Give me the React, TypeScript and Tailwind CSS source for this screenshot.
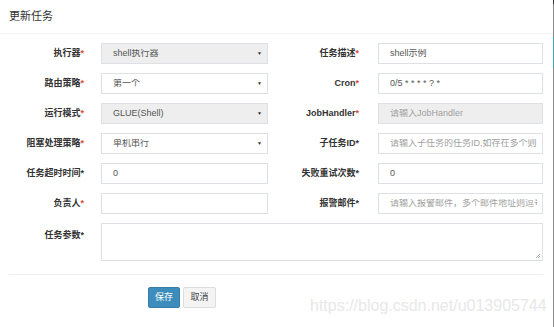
import React from "react";

const font = { fontFamily: '"Liberation Sans", Arial, "Noto Sans CJK SC", sans-serif' };

function Label({ text, red = true, w }: { text: string; red?: boolean; w: string }) {
  return (
    <div className={`${w} shrink-0 text-right text-[9px] font-bold text-[#333] leading-none`}>
      {text}
      <span className={red ? "text-[#dd4b39]" : "text-[#333]"}>*</span>
    </div>
  );
}

function Field({
  value,
  placeholder,
  disabled,
  select,
  w,
}: {
  value?: string;
  placeholder?: string;
  disabled?: boolean;
  select?: boolean;
  w: string;
}) {
  return (
    <div
      className={`${w} h-[21px] shrink-0 border border-[#dde0e5] flex items-center pl-[11px] pr-[5px] text-[9px] leading-none overflow-hidden whitespace-nowrap ${
        disabled ? "bg-[#eeeeee]" : "bg-white"
      }`}
    >
      <span className={`flex-1 min-w-0 overflow-hidden text-clip ${value ? "text-[#555]" : "text-[#a0a0a0]"}`}>
        {value ?? placeholder}
      </span>
      {select && <span className="text-[5px] text-[#333] ml-1">▼</span>}
    </div>
  );
}

function Row({ children }: { children: React.ReactNode }) {
  return <div className="flex items-center h-[21px]">{children}</div>;
}

export default function App() {
  return (
    <div className="w-[554px] h-[327px] bg-white flex relative overflow-hidden" style={font}>
      <div className="w-[553px] flex flex-col">
        <div className="h-[34px] border-b border-[#f4f4f4] pl-[9px] flex items-center text-[11px] text-[#333] pb-[1px]">
          更新任务
        </div>
        <div className="pt-[9px] flex flex-col gap-[9px]">
          <Row>
            <Label text="执行器" w="w-[84px]" />
            <div className="w-[17px]" />
            <Field value="shell执行器" disabled select w="w-[167px]" />
            <Label text="任务描述" w="w-[91px]" />
            <div className="w-[19px]" />
            <Field value="shell示例" w="w-[165px]" />
          </Row>
          <Row>
            <Label text="路由策略" w="w-[84px]" />
            <div className="w-[17px]" />
            <Field value="第一个" select w="w-[167px]" />
            <Label text="Cron" w="w-[91px]" />
            <div className="w-[19px]" />
            <Field value="0/5 * * * * ? *" w="w-[165px]" />
          </Row>
          <Row>
            <Label text="运行模式" w="w-[84px]" />
            <div className="w-[17px]" />
            <Field value="GLUE(Shell)" disabled select w="w-[167px]" />
            <Label text="JobHandler" w="w-[91px]" />
            <div className="w-[19px]" />
            <Field placeholder="请输入JobHandler" disabled w="w-[165px]" />
          </Row>
          <Row>
            <Label text="阻塞处理策略" w="w-[84px]" />
            <div className="w-[17px]" />
            <Field value="单机串行" select w="w-[167px]" />
            <Label text="子任务ID" red={false} w="w-[91px]" />
            <div className="w-[19px]" />
            <Field placeholder="请输入子任务的任务ID,如存在多个则逗号分隔" w="w-[165px]" />
          </Row>
          <Row>
            <Label text="任务超时时间" red={false} w="w-[84px]" />
            <div className="w-[17px]" />
            <Field value="0" w="w-[167px]" />
            <Label text="失败重试次数" red={false} w="w-[91px]" />
            <div className="w-[19px]" />
            <Field value="0" w="w-[165px]" />
          </Row>
          <Row>
            <Label text="负责人" w="w-[84px]" />
            <div className="w-[17px]" />
            <Field value="" w="w-[167px]" />
            <Label text="报警邮件" red={false} w="w-[91px]" />
            <div className="w-[19px]" />
            <Field placeholder="请输入报警邮件，多个邮件地址则逗号分隔" w="w-[165px]" />
          </Row>
          <div className="flex items-start h-[38px]">
            <div className="pt-[8px]">
              <Label text="任务参数" red={false} w="w-[84px]" />
            </div>
            <div className="w-[17px]" />
            <div className="w-[442px] h-[38px] border border-[#dde0e5] bg-white relative">
              <svg className="absolute right-[1px] bottom-[1px]" width="6" height="6" viewBox="0 0 6 6">
                <path d="M5 1 L1 5 M5 3 L3 5" stroke="#999" strokeWidth="0.8" />
              </svg>
            </div>
          </div>
        </div>
        <div className="mt-[13px] ml-[9px] w-[534px] border-t border-[#f0f0f0]" />
        <div className="mt-[12px] flex gap-[3px] pl-[148px]">
          <div className="w-[32px] h-[21px] bg-[#3c8dbc] border border-[#367fa9] rounded-[2px] text-white text-[9px] flex items-center justify-center">
            保存
          </div>
          <div className="w-[33px] h-[21px] bg-[#f4f4f4] border border-[#dddddd] rounded-[2px] text-[#444] text-[9px] flex items-center justify-center">
            取消
          </div>
        </div>
      </div>
      <div className="w-[1px] h-full flex flex-col bg-[#8a8a8a]">
        <div className="h-[4px] bg-[#333]" />
        <div className="h-[33px]" />
        <div className="h-[31px] bg-[#3aa7b5]" />
      </div>
      <div className="absolute left-[310px] top-[298px] text-[16px] text-[#e8e8e8] leading-none whitespace-nowrap">
        https://blog.csdn.net/u013905744
      </div>
    </div>
  );
}
